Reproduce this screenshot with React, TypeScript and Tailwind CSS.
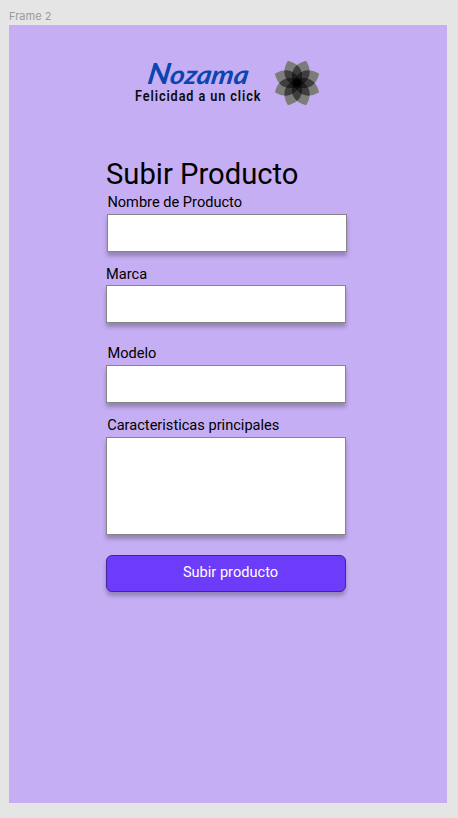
const petals = [22.5, 67.5, 112.5, 157.5, 202.5, 247.5, 292.5, 337.5];
const petalShape = "M0 5 C-10 -3 -12.5 -15 0 -24 C12.5 -15 10 -3 0 5Z";

function Flower() {
  return (
    <svg className="ml-[13px] block h-[46px] w-[46px]" viewBox="-23 -23 46 46">
      {petals.map((angle) => (
        <path key={angle} d={petalShape} transform={`rotate(${angle})`} fill="#f8f8f8" />
      ))}
      {petals.map((angle) => (
        <path
          key={angle}
          d={petalShape}
          transform={`rotate(${angle})`}
          fill="#000"
          fillOpacity="0.5"
        />
      ))}
    </svg>
  );
}

function Logo() {
  return (
    <div className="ml-[126px] flex h-[46px] items-start">
      <svg className="block h-[46px] w-[126px] overflow-visible" viewBox="0 0 126 46">
        <text
          x="0"
          y="0"
          transform="translate(11.5 24) skewX(-9)"
          textLength="101"
          lengthAdjust="spacingAndGlyphs"
          fill="#0b46b0"
          className="font-['Lato',sans-serif] text-[26px] font-bold italic"
        >
          <tspan className="text-[29px]">N</tspan>ozama
        </text>
        <text
          x="0"
          y="0"
          transform="translate(0 41) scale(0.82 1)"
          textLength="153"
          lengthAdjust="spacing"
          fill="#0b0b0f"
          className="font-['Roboto',sans-serif] text-[15.5px] font-semibold"
        >
          Felicidad a un click
        </text>
      </svg>
      <Flower />
    </div>
  );
}

const field =
  "block resize-none border border-[#858585] bg-white shadow-[0_4px_4px_rgba(0,0,0,0.25)] outline-none";

const label = "block h-[18px] text-[14.6px] leading-[18px] whitespace-nowrap";

export default function App() {
  return (
    <div className="h-[818px] w-[458px] overflow-hidden bg-[#e5e5e5] px-[9px] font-['Roboto',sans-serif] text-black">
      <div className="h-[25px] pt-[9px] font-['Inter',sans-serif] text-[11px] leading-[14px] text-[#999999]">
        Frame 2
      </div>
      <main className="h-[778px] w-[437.5px] bg-[#c5aef4] pt-[35px]">
        <Logo />
        <form className="ml-[97px] w-[242px] pt-[51px]">
          <h1 className="h-[35px] text-[29.2px] leading-[35px] whitespace-nowrap">Subir Producto</h1>
          <label htmlFor="nombre" className={`${label} ml-[1.4px] mt-[1px]`}>Nombre de Producto</label>
          <input id="nombre" className={`${field} ml-[1px] mt-[3px] h-[38px] w-[240px]`} />
          <label htmlFor="marca" className={`${label} mt-[13px]`}>Marca</label>
          <input id="marca" className={`${field} mt-[2px] h-[38px] w-[240px]`} />
          <label htmlFor="modelo" className={`${label} ml-[1.4px] mt-[21px]`}>Modelo</label>
          <input id="modelo" className={`${field} mt-[3px] h-[38px] w-[240px]`} />
          <label htmlFor="detalle" className={`${label} ml-[1.2px] mt-[13px]`}>Caracteristicas principales</label>
          <textarea id="detalle" className={`${field} mt-[3px] h-[98px] w-[240px]`} />
          <button
            type="button"
            className="mt-[20px] block h-[37px] w-[240px] rounded-[6px] border border-[#43249c] bg-[#6d3bfa] pb-[4px] pl-[9px] text-[14.6px] leading-[18px] text-white shadow-[0_4px_4px_rgba(0,0,0,0.25)]"
          >
            Subir producto
          </button>
        </form>
      </main>
    </div>
  );
}
